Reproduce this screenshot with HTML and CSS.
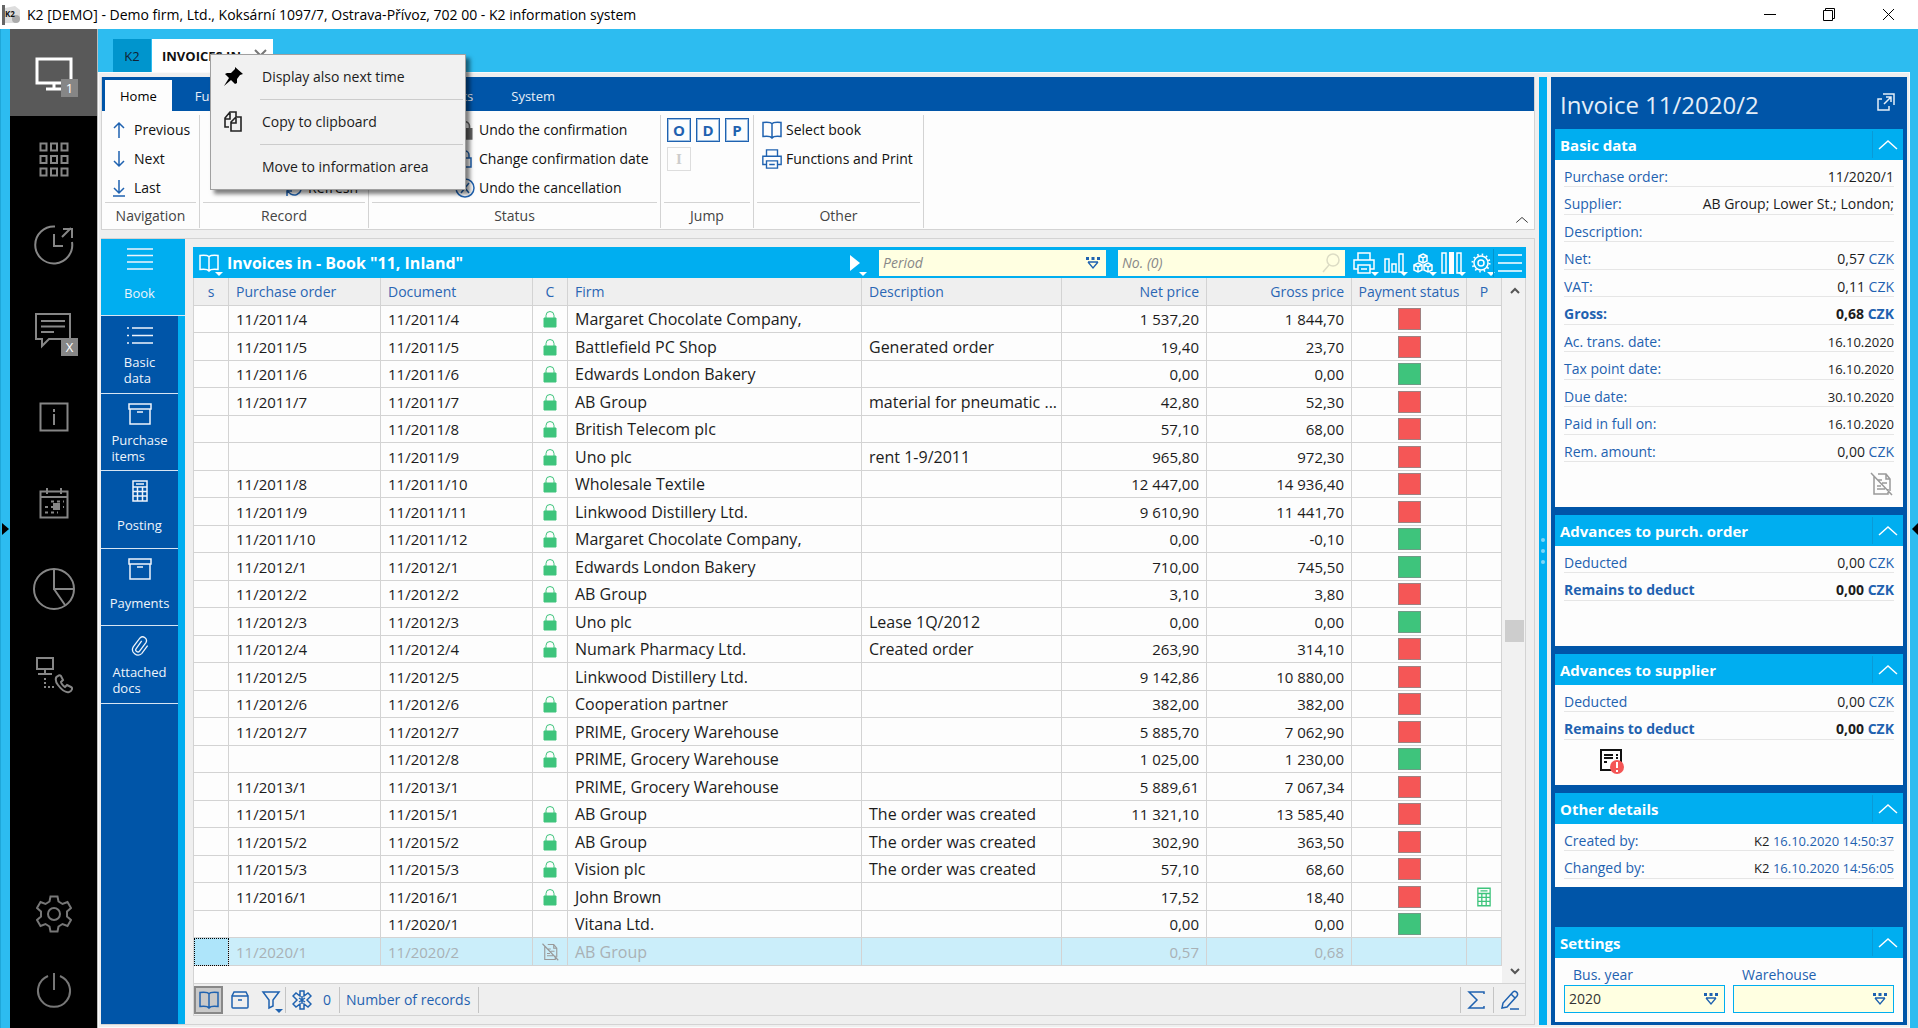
FILE: index.html
```html
<!DOCTYPE html>
<html lang="en">
<head>
<meta charset="utf-8">
<title>K2 information system</title>
<link rel="stylesheet" href="styles.css">
</head>
<body>
<svg class="sprite" aria-hidden="true">
  <symbol id="i-book" viewBox="0 0 22 20"><path d="M11 4v14M11 4C10 2 7 2 2 2.500v14C6 16 9.500 16 11 18 12.500 16 16 16 20 16.500v-14C15 2 12 2 11 4z"/></symbol>
  <symbol id="i-printer" viewBox="0 0 24 24"><path d="M6 9V2h12v7M6 18H2V9h20v9h-4M6 14h12v8H6zM9 18h6"/></symbol>
  <symbol id="i-lock" viewBox="0 0 16 18"><path d="M4 8V5.500a4 4 0 0 1 8 0V8" fill="none"/><path d="M2 8h12v9H2z" class="solid"/></symbol>
  <symbol id="i-lockline" viewBox="0 0 16 20"><path d="M4 9V6a4 4 0 0 1 8 0v3M2 9h12v9H2z"/></symbol>
  <symbol id="i-nodoc" viewBox="0 0 24 24"><path d="M5 4v18h14v-5M9 2h8l4 5v12M17 2v5h4M9 8h4M13 11h5M8 14h4M8 17h8M2 1l21 22"/></symbol>
  <symbol id="i-calc" viewBox="0 0 16 22"><path d="M1 1h14v20H1zM1 7h14M1 11.500h14M1 16h14M5.500 7v14M10.500 7v14M4 4h8"/></symbol>
  <symbol id="i-box" viewBox="0 0 24 22"><path d="M1 1h22v5H1zM2 6v15h20V6M9 9h6"/></symbol>
  <symbol id="i-clip" viewBox="0 0 24 26"><path d="M14 7l-6.500 9a2.500 2.500 0 0 0 4 3L19 9a4.500 4.500 0 0 0-7-5.500L4 14a6.500 6.500 0 0 0 10 8l7-9.500"/></symbol>
  <symbol id="i-up" viewBox="0 0 22 12"><path d="M2 10l9-8 9 8"/></symbol>
  <symbol id="i-drop" viewBox="0 0 16 14"><path d="M1 1h3v3H1zM6.500 1h3v3h-3zM12 1h3v3h-3z" fill="currentColor" stroke="none"/><path d="M3 6h10M3 6l5 6 5-6" fill="none" stroke-width="1.300"/></symbol>
</svg>

<header class="titlebar">
  <svg class="app-icon" viewBox="0 0 20 20"><path d="M0 0h3v20H0z" fill="#666"/><path d="M3 3l10-2 5 4v8l-5 5-10 0z" fill="#ddd"/><circle cx="14" cy="14" r="4" fill="#aaa"/><text x="3" y="12" font-size="8" font-weight="700" fill="#111">K2</text></svg>
  <h1>K2 [DEMO] - Demo firm, Ltd., Koksární 1097/7, Ostrava-Přívoz, 702 00 - K2 information system</h1>
  <div class="win-buttons">
    <button aria-label="Minimize"><svg width="15" height="15" viewBox="0 0 15 15"><path d="M1 7.500h12"/></svg></button>
    <button aria-label="Restore"><svg width="15" height="15" viewBox="0 0 15 15"><path d="M1.500 3.500h9v10h-9zM3.500 3.500v-2h9v10h-2"/></svg></button>
    <button aria-label="Close"><svg width="15" height="15" viewBox="0 0 15 15"><path d="M2 2l11 11M13 2L2 13"/></svg></button>
  </div>
</header>

<div class="app">
  <div class="edge edge-left"><svg width="7" height="12" viewBox="0 0 7 12"><path d="M0 0l7 6-7 6z"/></svg></div>
  <nav class="rail" aria-label="Modules">
    <button class="on" aria-label="Desktops"><svg width="38" height="36" viewBox="0 0 38 36"><path d="M2 4h34v24H2zM19 28v6M11 34h16"/></svg><span class="badge">1</span></button>
    <button aria-label="Applications"><svg width="30" height="36" viewBox="0 0 30 36"><path d="M1.500 2.500h6v7h-6zM12 2.500h6v7h-6zM22.500 2.500h6v7h-6zM1.500 15h6v7h-6zM12 15h6v7h-6zM22.500 15h6v7h-6zM1.500 27.500h6v7h-6zM12 27.500h6v7h-6zM22.500 27.500h6v7h-6z"/></svg></button>
    <button aria-label="History"><svg width="42" height="42" viewBox="0 0 42 42"><path d="M22 2.500A18.500 18.500 0 1 0 39 18M21 10v12h9M29 13l9-9M30 5h9v9"/></svg></button>
    <button aria-label="Messages"><svg width="40" height="38" viewBox="0 0 40 38"><path d="M2 2h34v25H15l-7 7v-7H2zM7 9h24M7 14.500h24M7 20h13"/></svg><span class="badge">X</span></button>
    <button aria-label="Information"><svg width="30" height="30" viewBox="0 0 30 30"><path d="M1.500 1.500h27v27h-27zM15 7v3M15 12v11"/></svg></button>
    <button aria-label="Calendar"><svg width="30" height="32" viewBox="0 0 30 32"><path d="M1.500 4.500h27v26h-27zM1.500 10h27M8 1v6M22 1v6"/><path d="M6 20h19M6 25.500h13M12 14.500h13" stroke-dasharray="3 3"/><path d="M15 17h5v5h-5z" fill="#868686"/></svg></button>
    <button aria-label="Statistics"><svg width="42" height="42" viewBox="0 0 42 42"><circle cx="21" cy="21" r="20"/><path d="M21 1v20h20M21 21l11 16"/></svg></button>
    <button aria-label="Telephone"><svg width="38" height="38" viewBox="0 0 38 38"><path d="M2 2h16v11H2zM10 13v4M3 18h14"/><path d="M10 22v9h9" stroke-dasharray="2 2"/><path d="M23 20c-3 1-3 5 0 9s7 8 11 7c3-1 4-4 2-5l-4-2-2 2c-2-1-4-4-4-5l2-2-2-4c-1-1-2-1-3 0z"/></svg></button>
    <button class="low first" aria-label="Settings"><svg width="36" height="38" viewBox="0 0 36 38"><path d="M14.500 1.500h7l1 5 4 2.500 5-2 3.500 6-4 3.500v5l4 3.500-3.500 6-5-2-4 2.500-1 5h-7l-1-5-4-2.500-5 2L1 25l4-3.500v-5L1 13l3.500-6 5 2 4-2.500z"/><circle cx="18" cy="19" r="6"/></svg></button>
    <button class="low" aria-label="Power"><svg width="36" height="36" viewBox="0 0 36 36"><path d="M12 4a16 16 0 1 0 12 0M18 1v17"/></svg></button>
  </nav>

  <main class="main">
    <div class="doc-tabs">
      <button class="doc-tab k2">K2</button>
      <button class="doc-tab current">INVOICES IN <svg width="13" height="13" viewBox="0 0 13 13"><path d="M1 1l11 11M12 1L1 12"/></svg></button>
      <div class="menu" role="menu">
        <button role="menuitem"><svg width="20" height="20" viewBox="0 0 20 20"><path d="M12 0l8 7-3 1-3 4 0 4-2 1-4-4-7 6 5-8-4-4 2-1 4 0 4-4z" fill="#000"/></svg>Display also next time</button>
        <hr>
        <button role="menuitem"><svg width="20" height="22" viewBox="0 0 20 22"><path d="M6 16H2V7l5-6h6v5M2 8h5V2M8 11l5-5h5v14H8zM8 12h5V7" fill="none" stroke="#222" stroke-width="1.600"/></svg>Copy to clipboard</button>
        <hr>
        <button role="menuitem"><svg width="20" height="20"></svg>Move to information area</button>
      </div>
    </div>

    <div class="workspace">
      <div class="left">
        <section class="ribbon">
          <div class="ribbon-tabs">
            <button class="on">Home</button><button>Functions</button><button>Communication</button><button>Reports</button><button>System</button>
          </div>
          <div class="ribbon-body">
            <div class="group navigation">
              <div class="cmds">
                <button class="cmd"><svg width="22" height="18" viewBox="0 0 22 18"><path d="M11 17V2M6 7l5-5 5 5"/></svg>Previous</button>
                <button class="cmd"><svg width="22" height="18" viewBox="0 0 22 18"><path d="M11 1v15M6 11l5 5 5-5"/></svg>Next</button>
                <button class="cmd"><svg width="22" height="18" viewBox="0 0 22 18"><path d="M11 1v13M6 9l5 5 5-5M5 17h12"/></svg>Last</button>
              </div>
              <h2>Navigation</h2>
            </div>
            <div class="group record">
              <div class="cmds">
                <button class="cmd"><svg width="20" height="20" viewBox="0 0 20 20"><path d="M16 6a7 7 0 1 0 1 6M17 2v5h-5M3 18v-5h5"/></svg>Refresh</button>
              </div>
              <h2>Record</h2>
            </div>
            <div class="group status">
              <div class="cmds">
                <button class="cmd"><svg class="grey" width="20" height="20"><use href="#i-lock"/></svg>Undo the confirmation</button>
                <button class="cmd"><svg width="20" height="20"><use href="#i-lockline"/></svg>Change confirmation date</button>
                <button class="cmd"><svg width="20" height="20" viewBox="0 0 20 20"><circle cx="10" cy="10" r="9"/><path d="M6 5l8 10M14 5L6 15"/></svg>Undo the cancellation</button>
              </div>
              <h2>Status</h2>
            </div>
            <div class="group jump">
              <div class="cmds letters"><button>O</button><button>D</button><button>P</button><button class="serif" disabled>I</button></div>
              <h2>Jump</h2>
            </div>
            <div class="group other">
              <div class="cmds">
                <button class="cmd"><svg width="22" height="20"><use href="#i-book"/></svg>Select book</button>
                <button class="cmd"><svg width="22" height="22"><use href="#i-printer"/></svg>Functions and Print</button>
              </div>
              <h2>Other</h2>
            </div>
            <button class="collapse" aria-label="Collapse ribbon"><svg width="14" height="8"><use href="#i-up"/></svg></button>
          </div>
        </section>

        <section class="content">
          <nav class="pages" aria-label="Pages">
            <button class="on"><svg width="26" height="22" viewBox="0 0 26 22"><path d="M0 1h26M0 7.500h26M0 14h26M0 21h26"/></svg><span>Book</span></button>
            <button><svg width="26" height="22" viewBox="0 0 26 22"><path d="M0 3h2M5 3h21M0 10.500h2M5 10.500h21M0 18h2M5 18h21"/></svg><span>Basic<br>data</span></button>
            <button><svg width="24" height="22"><use href="#i-box"/></svg><span>Purchase<br>items</span></button>
            <button><svg width="16" height="22"><use href="#i-calc"/></svg><span>Posting</span></button>
            <button><svg width="24" height="22"><use href="#i-box"/></svg><span>Payments</span></button>
            <button><svg width="24" height="22"><use href="#i-clip"/></svg><span>Attached<br>docs</span></button>
          </nav>

          <div class="grid">
            <div class="grid-head">
              <button class="tool" aria-label="Book"><svg width="22" height="20"><use href="#i-book"/></svg><i></i></button>
              <h2>Invoices in - Book "11, Inland"</h2>
              <button class="tool play" aria-label="Run"><svg width="10" height="16" viewBox="0 0 10 16"><path d="M0 0l10 8-10 8z" fill="#fff" stroke="none"/></svg><i></i></button>
              <div class="field"><input type="text" placeholder="Period" aria-label="Period"><svg width="16" height="14"><use href="#i-drop"/></svg></div>
              <div class="field"><input type="text" placeholder="No. (0)" aria-label="Number"><svg class="search" width="18" height="20" viewBox="0 0 18 20"><circle cx="11" cy="7" r="6"/><path d="M7 12l-6 7"/></svg></div>
              <div class="tools">
                <button class="tool" aria-label="Print"><svg width="24" height="24"><use href="#i-printer"/></svg><i></i></button>
                <button class="tool" aria-label="Charts"><svg width="22" height="22" viewBox="0 0 22 22"><path d="M2 7h4v13H2zM9 12h4v8H9zM16 2h4v18h-4z"/></svg><i></i></button>
                <button class="tool" aria-label="Cubes"><svg width="22" height="22" viewBox="0 0 22 22"><path d="M11 2l4 2v5l-4 2-4-2V4zM6 11l4 2v5l-4 2-4-2v-5zM16 11l4 2v5l-4 2-4-2v-5zM7 4l4 2 4-2M11 6v5M2 13l4 2 4-2M6 15v5M12 13l4 2 4-2M16 15v5"/></svg><i></i></button>
                <button class="tool" aria-label="Columns"><svg width="22" height="22" viewBox="0 0 22 22"><path d="M1 1h4v20H1zM16 1h4v20h-4z"/><path d="M8 0h5v22H8z" fill="#fff" stroke="none"/></svg><i></i></button>
                <button class="tool" aria-label="Settings"><svg width="22" height="22" viewBox="0 0 22 22"><circle cx="11" cy="11" r="7"/><circle cx="11" cy="11" r="3"/><circle cx="11" cy="11" r="8.500" stroke-width="2" stroke-dasharray="1.500 3"/></svg><i></i></button>
                <button class="tool burger" aria-label="Menu"><svg width="24" height="18" viewBox="0 0 24 18"><path d="M0 1h24M0 9h24M0 17h24"/></svg></button>
              </div>
            </div>

            <div class="grid-body">
              <div class="table-wrap">
              <table>
                <colgroup><col class="c-s"><col class="c-doc"><col class="c-doc"><col class="c-s"><col><col class="c-desc"><col class="c-num"><col class="c-num"><col class="c-pay"><col class="c-s"></colgroup>
                <thead><tr><th class="mid">s</th><th>Purchase order</th><th>Document</th><th class="mid">C</th><th>Firm</th><th>Description</th><th class="num">Net price</th><th class="num">Gross price</th><th class="mid">Payment status</th><th class="mid">P</th></tr></thead>
                <tbody>
                <tr><td></td><td>11/2011/4</td><td>11/2011/4</td><td><svg class="lock"><use href="#i-lock"/></svg></td><td>Margaret Chocolate Company,</td><td></td><td>1 537,20</td><td>1 844,70</td><td><b class="red"></b></td><td></td></tr>
                <tr><td></td><td>11/2011/5</td><td>11/2011/5</td><td><svg class="lock"><use href="#i-lock"/></svg></td><td>Battlefield PC Shop</td><td>Generated order</td><td>19,40</td><td>23,70</td><td><b class="red"></b></td><td></td></tr>
                <tr><td></td><td>11/2011/6</td><td>11/2011/6</td><td><svg class="lock"><use href="#i-lock"/></svg></td><td>Edwards London Bakery</td><td></td><td>0,00</td><td>0,00</td><td><b class="green"></b></td><td></td></tr>
                <tr><td></td><td>11/2011/7</td><td>11/2011/7</td><td><svg class="lock"><use href="#i-lock"/></svg></td><td>AB Group</td><td>material for pneumatic ...</td><td>42,80</td><td>52,30</td><td><b class="red"></b></td><td></td></tr>
                <tr><td></td><td></td><td>11/2011/8</td><td><svg class="lock"><use href="#i-lock"/></svg></td><td>British Telecom plc</td><td></td><td>57,10</td><td>68,00</td><td><b class="red"></b></td><td></td></tr>
                <tr><td></td><td></td><td>11/2011/9</td><td><svg class="lock"><use href="#i-lock"/></svg></td><td>Uno plc</td><td>rent 1-9/2011</td><td>965,80</td><td>972,30</td><td><b class="red"></b></td><td></td></tr>
                <tr><td></td><td>11/2011/8</td><td>11/2011/10</td><td><svg class="lock"><use href="#i-lock"/></svg></td><td>Wholesale Textile</td><td></td><td>12 447,00</td><td>14 936,40</td><td><b class="red"></b></td><td></td></tr>
                <tr><td></td><td>11/2011/9</td><td>11/2011/11</td><td><svg class="lock"><use href="#i-lock"/></svg></td><td>Linkwood Distillery Ltd.</td><td></td><td>9 610,90</td><td>11 441,70</td><td><b class="red"></b></td><td></td></tr>
                <tr><td></td><td>11/2011/10</td><td>11/2011/12</td><td><svg class="lock"><use href="#i-lock"/></svg></td><td>Margaret Chocolate Company,</td><td></td><td>0,00</td><td>-0,10</td><td><b class="green"></b></td><td></td></tr>
                <tr><td></td><td>11/2012/1</td><td>11/2012/1</td><td><svg class="lock"><use href="#i-lock"/></svg></td><td>Edwards London Bakery</td><td></td><td>710,00</td><td>745,50</td><td><b class="green"></b></td><td></td></tr>
                <tr><td></td><td>11/2012/2</td><td>11/2012/2</td><td><svg class="lock"><use href="#i-lock"/></svg></td><td>AB Group</td><td></td><td>3,10</td><td>3,80</td><td><b class="red"></b></td><td></td></tr>
                <tr><td></td><td>11/2012/3</td><td>11/2012/3</td><td><svg class="lock"><use href="#i-lock"/></svg></td><td>Uno plc</td><td>Lease 1Q/2012</td><td>0,00</td><td>0,00</td><td><b class="green"></b></td><td></td></tr>
                <tr><td></td><td>11/2012/4</td><td>11/2012/4</td><td><svg class="lock"><use href="#i-lock"/></svg></td><td>Numark Pharmacy Ltd.</td><td>Created order</td><td>263,90</td><td>314,10</td><td><b class="red"></b></td><td></td></tr>
                <tr><td></td><td>11/2012/5</td><td>11/2012/5</td><td></td><td>Linkwood Distillery Ltd.</td><td></td><td>9 142,86</td><td>10 880,00</td><td><b class="red"></b></td><td></td></tr>
                <tr><td></td><td>11/2012/6</td><td>11/2012/6</td><td><svg class="lock"><use href="#i-lock"/></svg></td><td>Cooperation partner</td><td></td><td>382,00</td><td>382,00</td><td><b class="red"></b></td><td></td></tr>
                <tr><td></td><td>11/2012/7</td><td>11/2012/7</td><td><svg class="lock"><use href="#i-lock"/></svg></td><td>PRIME, Grocery Warehouse</td><td></td><td>5 885,70</td><td>7 062,90</td><td><b class="red"></b></td><td></td></tr>
                <tr><td></td><td></td><td>11/2012/8</td><td><svg class="lock"><use href="#i-lock"/></svg></td><td>PRIME, Grocery Warehouse</td><td></td><td>1 025,00</td><td>1 230,00</td><td><b class="green"></b></td><td></td></tr>
                <tr><td></td><td>11/2013/1</td><td>11/2013/1</td><td></td><td>PRIME, Grocery Warehouse</td><td></td><td>5 889,61</td><td>7 067,34</td><td><b class="red"></b></td><td></td></tr>
                <tr><td></td><td>11/2015/1</td><td>11/2015/1</td><td><svg class="lock"><use href="#i-lock"/></svg></td><td>AB Group</td><td>The order was created</td><td>11 321,10</td><td>13 585,40</td><td><b class="red"></b></td><td></td></tr>
                <tr><td></td><td>11/2015/2</td><td>11/2015/2</td><td><svg class="lock"><use href="#i-lock"/></svg></td><td>AB Group</td><td>The order was created</td><td>302,90</td><td>363,50</td><td><b class="red"></b></td><td></td></tr>
                <tr><td></td><td>11/2015/3</td><td>11/2015/3</td><td><svg class="lock"><use href="#i-lock"/></svg></td><td>Vision plc</td><td>The order was created</td><td>57,10</td><td>68,60</td><td><b class="red"></b></td><td></td></tr>
                <tr><td></td><td>11/2016/1</td><td>11/2016/1</td><td><svg class="lock"><use href="#i-lock"/></svg></td><td>John Brown</td><td></td><td>17,52</td><td>18,40</td><td><b class="red"></b></td><td><svg class="calc" width="14" height="20"><use href="#i-calc"/></svg></td></tr>
                <tr><td></td><td></td><td>11/2020/1</td><td></td><td>Vitana Ltd.</td><td></td><td>0,00</td><td>0,00</td><td><b class="green"></b></td><td></td></tr>
                <tr class="selected"><td></td><td>11/2020/1</td><td>11/2020/2</td><td><svg class="nodoc" width="18" height="18"><use href="#i-nodoc"/></svg></td><td>AB Group</td><td></td><td>0,57</td><td>0,68</td><td></td><td></td></tr>
                </tbody>
              </table>
              </div>
              <div class="scroll">
                <button aria-label="Scroll up"><svg width="14" height="9" viewBox="0 0 14 9"><path d="M3 7l4-4 4 4"/></svg></button>
                <div class="track"><div class="thumb"></div></div>
                <button aria-label="Scroll down"><svg width="14" height="9" viewBox="0 0 14 9"><path d="M3 2l4 4 4-4"/></svg></button>
              </div>
            </div>

            <footer class="grid-foot">
              <button class="tool pressed" aria-label="Book view"><svg width="22" height="20"><use href="#i-book"/></svg></button>
              <button class="tool" aria-label="Containers"><svg width="20" height="20" viewBox="0 0 20 20"><path d="M2 6h16v11a1 1 0 0 1-1 1H3a1 1 0 0 1-1-1zM2 6l2-4h12l2 4M8 10h4"/></svg></button>
              <button class="tool filter" aria-label="Filter"><svg width="20" height="20" viewBox="0 0 20 20"><path d="M2 2h16l-6 8v6l-4 2v-8z"/></svg><i></i></button>
              <span class="cell"><svg width="20" height="20" viewBox="0 0 20 20"><path d="M8 1h4v5l4-3 3 3-4 4 4 4-3 3-4-3v5H8v-5l-4 3-3-3 4-4-4-4 3-3 4 3z"/><path d="M10 6v8M7 8l6 4M13 8l-6 4"/></svg>0</span>
              <span class="cell">Number of records</span>
              <span class="gap"></span>
              <button class="cell" aria-label="Sum"><svg width="18" height="20" viewBox="0 0 18 20"><path d="M17 4V2H2l8 8-8 8h15v-2"/></svg></button>
              <button class="cell last" aria-label="Edit"><svg width="20" height="20" viewBox="0 0 20 20"><path d="M2 18l1-5L13 2c2-2 6 1 4 4L7 17zM11 4l4 4M10 19h9"/></svg></button>
            </footer>
          </div>
        </section>
      </div>

      <div class="splitter"><i></i><i></i><i></i></div>

      <aside class="detail">
        <header><h2>Invoice 11/2020/2</h2><button aria-label="Open in window"><svg width="18" height="18" viewBox="0 0 18 18"><path d="M5 6H1v11h11v-4M6 1h11v11M7 11l7-7M9 4h5v5"/></svg></button></header>

        <section class="card basic">
          <h3>Basic data<button aria-label="Collapse"><svg width="22" height="12"><use href="#i-up"/></svg></button></h3>
          <dl>
            <div><dt>Purchase order:</dt><dd>11/2020/1</dd></div>
            <div><dt>Supplier:</dt><dd>AB Group; Lower St.; London;</dd></div>
            <div><dt>Description:</dt><dd></dd></div>
            <div><dt>Net:</dt><dd>0,57 <em>CZK</em></dd></div>
            <div><dt>VAT:</dt><dd>0,11 <em>CZK</em></dd></div>
            <div class="strong"><dt>Gross:</dt><dd>0,68 <em>CZK</em></dd></div>
            <div><dt>Ac. trans. date:</dt><dd class="date">16.10.2020</dd></div>
            <div><dt>Tax point date:</dt><dd class="date">16.10.2020</dd></div>
            <div><dt>Due date:</dt><dd class="date">30.10.2020</dd></div>
            <div><dt>Paid in full on:</dt><dd class="date">16.10.2020</dd></div>
            <div><dt>Rem. amount:</dt><dd>0,00 <em>CZK</em></dd></div>
          </dl>
          <svg class="nodoc" width="24" height="24"><use href="#i-nodoc"/></svg>
        </section>

        <section class="card advance">
          <h3>Advances to purch. order<button aria-label="Collapse"><svg width="22" height="12"><use href="#i-up"/></svg></button></h3>
          <dl>
            <div><dt>Deducted</dt><dd>0,00 <em>CZK</em></dd></div>
            <div class="strong"><dt>Remains to deduct</dt><dd>0,00 <em>CZK</em></dd></div>
          </dl>
        </section>

        <section class="card advance">
          <h3>Advances to supplier<button aria-label="Collapse"><svg width="22" height="12"><use href="#i-up"/></svg></button></h3>
          <dl>
            <div><dt>Deducted</dt><dd>0,00 <em>CZK</em></dd></div>
            <div class="strong"><dt>Remains to deduct</dt><dd>0,00 <em>CZK</em></dd></div>
          </dl>
          <svg class="warn" width="26" height="26" viewBox="0 0 26 26"><path d="M2 2h20v20H2zM5 7h9M5 10h9M5 14h3M17 7h2M17 10h2" fill="none" stroke="#111" stroke-width="2"/><circle cx="18" cy="19" r="7" fill="#f45555" stroke="none"/><path d="M18 14v6M18 22v2" stroke="#fff" stroke-width="2"/></svg>
        </section>

        <section class="card">
          <h3>Other details<button aria-label="Collapse"><svg width="22" height="12"><use href="#i-up"/></svg></button></h3>
          <dl>
            <div><dt>Created by:</dt><dd class="date">K2 <em>16.10.2020 14:50:37</em></dd></div>
            <div><dt>Changed by:</dt><dd class="date">K2 <em>16.10.2020 14:56:05</em></dd></div>
          </dl>
        </section>

        <section class="card settings">
          <h3>Settings<button aria-label="Collapse"><svg width="22" height="12"><use href="#i-up"/></svg></button></h3>
          <form>
            <label>Bus. year<span class="field"><select><option>2020</option></select><svg width="16" height="14"><use href="#i-drop"/></svg></span></label>
            <label>Warehouse<span class="field"><select><option></option></select><svg width="16" height="14"><use href="#i-drop"/></svg></span></label>
          </form>
        </section>
      </aside>
    </div>
  </main>
  <div class="edge edge-right"><svg width="6" height="12" viewBox="0 0 6 12"><path d="M6 0L0 6l6 6z"/></svg></div>
</div>
</body>
</html>
```
FILE: styles.css
```css
:root {
  --sky: #2dbcf0;
  --cyan: #00aef0;
  --navy: #0055a8;
  --blue: #1f62b0;
  --line: #d3d3d3;
  --panel: #efefef;
  --paper: #fdfdfd;
}
* { box-sizing: border-box; }
body {
  margin: 0;
  min-height: 100vh;
  display: flex;
  flex-direction: column;
  background: var(--sky);
  color: #1c1c1c;
  font: 14px/20px "Open Sans", "Noto Sans", sans-serif;
}
h1, h2, h3, dl, dd { margin: 0; }
h1, h2, h3 { font-size: inherit; font-weight: 400; }
button, input, select { font: inherit; color: inherit; border: 0; background: none; padding: 0; margin: 0; }
svg { fill: none; stroke: currentColor; stroke-width: 1.500; flex: none; }
.solid { fill: currentColor; }
.sprite { position: absolute; width: 0; height: 0; }

/* Window title */
.titlebar { display: flex; align-items: center; height: 29px; padding-left: 2px; background: #fff; color: #000; }
.titlebar h1 { flex: 1; font-size: 14px; line-height: 28px; margin-left: 5px; }
.app-icon { width: 20px; height: 20px; stroke: none; }
.win-buttons { display: flex; }
.win-buttons button { width: 59px; height: 29px; display: grid; place-items: center; }
.win-buttons svg { stroke-width: 1; }

.app { flex: 1; display: flex; }
.edge { display: flex; align-items: center; color: #000; }
.edge svg { fill: #000; stroke: none; }
.edge-left { width: 10px; border-left: 1px solid #1fa7d8; padding-left: 1px; }
.edge-right { width: 8px; justify-content: flex-end; }

/* Module rail */
.rail { width: 88px; background: #000; border-right: 1px solid #bbb; color: #868686; display: flex; flex-direction: column; }
.rail button { position: relative; height: 86px; display: grid; place-items: center; }
.rail button.on { height: 87px; background: #595959; color: #fff; }
.rail svg { stroke-width: 2; }
.rail .on svg { stroke-width: 3; }
.rail button.low { height: 76px; color: #777; }
.rail button.first { margin-top: auto; }
.badge { position: absolute; left: 51px; top: 50px; width: 17px; height: 18px; background: #868686; color: #fff; font-size: 13px; line-height: 18px; text-align: center; }

/* Document tabs and their menu */
.main { flex: 1; min-width: 0; display: flex; flex-direction: column; }
.doc-tabs { position: relative; height: 43px; padding-left: 15px; display: flex; align-items: flex-end; gap: 1px; }
.doc-tab { height: 33px; color: #111; }
.doc-tab.k2 { width: 38px; background: #0095cd; font-size: 13px; color: #123; }
.doc-tab.current { width: 121px; background: #fff; font-weight: 700; font-size: 13px; display: flex; align-items: center; justify-content: space-between; padding: 0 6px 0 10px; white-space: nowrap; }
.doc-tab svg { color: #777; stroke-width: 2; }
.menu { position: absolute; z-index: 5; left: 112px; top: 25px; width: 256px; background: #f1f1f1; border: 1px solid #a0a0a0; box-shadow: 4px 4px 4px rgba(0, 0, 0, .5); }
.menu button { width: 100%; height: 44px; display: flex; align-items: center; gap: 19px; padding-left: 12px; }
.menu svg { stroke: none; }
.menu hr { margin: 0 2px 0 49px; border: 0; height: 1px; background: #ccc; }

/* Workspace */
.workspace { flex: 1; display: flex; gap: 4px; background: var(--panel); border: 1px solid #fafafa; padding: 4px 2px 2px; }
.left { flex: 1; min-width: 0; display: flex; flex-direction: column; gap: 8px; }
.splitter { width: 8px; background: var(--cyan); display: flex; flex-direction: column; align-items: center; justify-content: center; gap: 7px; }
.splitter i { width: 4px; height: 4px; border-radius: 2px; background: #7fd6f7; }

/* Ribbon */
.ribbon { border: 1px solid var(--line); border-top: 0; background: var(--paper); }
.ribbon-tabs { height: 34px; background: var(--navy); display: flex; align-items: flex-end; gap: 8px; padding-left: 3px; font-size: 13px; color: #e6eef7; }
.ribbon-tabs button { height: 31px; padding: 0 15px; }
.ribbon-tabs .on { background: var(--paper); color: #000; }
.ribbon-body { display: flex; height: 118px; padding: 4px 0 1px; }
.group { display: flex; flex-direction: column; border-right: 1px solid var(--line); color: #111; }
.group h2 { margin: 0 3px; border-top: 1px solid var(--line); text-align: center; line-height: 25px; color: #444; }
.cmds { height: 87px; display: flex; flex-direction: column; }
.cmd { height: 29px; display: flex; align-items: center; white-space: nowrap; }
.cmd svg { color: var(--blue); }
.navigation { width: 98px; }
.navigation .cmd { gap: 4px; padding-left: 6px; }
.record { width: 169px; }
.record .cmds { justify-content: flex-end; padding-left: 84px; }
.record .cmd { gap: 4px; }
.status { width: 292px; }
.status .cmds { padding-left: 86px; }
.status .cmd { gap: 4px; }
.status .grey { color: #666; }
.jump { width: 93px; }
.letters { display: grid; grid-template-columns: repeat(3, 24px); grid-auto-rows: 29px; gap: 0 5px; padding-left: 6px; align-items: center; }
.letters button { height: 24px; border: 1px solid var(--blue); outline: 1px solid #9dbfe2; outline-offset: -2px; color: var(--blue); font-weight: 700; font-size: 15px; line-height: 20px; }
.letters button:disabled { border-color: #ddd; outline: 0; color: #ccc; }
.letters .serif { font-family: "Liberation Serif", serif; }
.other { width: 170px; }
.other .cmd { gap: 3px; padding-left: 7px; }
.collapse { margin-left: auto; align-self: flex-end; padding: 0 5px 4px; line-height: 0; color: #333; }

/* Content frame and page list */
.content { flex: 1; display: flex; border: 1px solid var(--line); border-left: 0; }
.pages { width: 84px; background: linear-gradient(to right, var(--navy) 77px, var(--cyan) 77px); color: #eef4fb; font-size: 13px; line-height: 16px; display: flex; flex-direction: column; }
.pages button { width: 77px; height: 77px; border-bottom: 1px solid #d7e5f3; display: flex; flex-direction: column; align-items: center; padding-top: 9px; text-align: left; }
.pages button:nth-child(even) { height: 78px; }
.pages .on { width: 84px; padding-right: 7px; background: var(--cyan); }
.pages span { margin: auto 0; }

/* Invoice list */
.grid { flex: 1; min-width: 0; margin: 8px; display: flex; flex-direction: column; }
.grid-head { height: 31px; background: var(--cyan); color: #fff; display: flex; align-items: center; padding: 0 4px 0 5px; }
.grid-head h2 { flex: 1; margin-left: 7px; font-size: 16px; font-weight: 700; }
.tool { position: relative; display: grid; place-items: center; height: 28px; }
.tool i { position: absolute; right: -3px; bottom: 1px; border: 4px solid transparent; border-top-color: currentColor; border-bottom: 0; }
.play { width: 14px; margin-right: 15px; justify-items: start; }
.field { display: flex; align-items: center; background: #ffffe1; padding-right: 5px; }
.field input, .field select { flex: 1; min-width: 0; height: 26px; padding: 0 4px; color: #333; appearance: none; outline: 0; }
.field input::placeholder { color: #888; font-style: italic; opacity: 1; }
.field svg { color: var(--blue); }
.field .search { color: #dcdcc4; }
.grid-head .field { width: 227px; margin-right: 12px; }
.grid-head .field + .field { margin-right: 7px; }
.tools { display: flex; gap: 7px; }
.tools .burger { border-left: 1px solid #0393cc; padding-left: 4px; margin-left: -6px; }

.grid-body { flex: 1; display: flex; align-items: flex-start; background: var(--paper); border-left: 1px solid var(--line); border-right: 1px solid var(--line); }
.table-wrap { flex: 1; min-width: 0; }
table { width: 100%; table-layout: fixed; border-collapse: separate; border-spacing: 0; }
.c-s { width: 35px; }
.c-doc { width: 152px; }
.c-desc { width: 200px; }
.c-num { width: 145px; }
.c-pay { width: 115px; }
th, td { padding: 0 7px; border-right: 1px solid var(--line); border-bottom: 1px solid var(--line); white-space: nowrap; overflow: hidden; text-align: left; }
th { height: 28px; background: var(--panel); color: #2a66b4; font-weight: 400; font-size: 14px; line-height: 24px; }
th.mid { text-align: center; padding: 0; }
th.num { text-align: right; }
td { height: 27px; font-size: 15px; line-height: 24px; }
tr:nth-child(even) td { height: 28px; }
td:nth-child(5), td:nth-child(6) { font-size: 16px; }
td:nth-child(7), td:nth-child(8) { text-align: right; }
td:nth-child(4), td:nth-child(9), td:nth-child(10) { text-align: center; padding: 0; line-height: 0; }
td b { display: inline-block; width: 23px; height: 22px; border: 1px solid #a08080; }
.red { background: #f55656; }
.green { background: #3ec47c; border-color: #6f9c86; }
.lock { width: 16px; height: 18px; color: #3ec47c; stroke-width: 1; }
.calc { color: #3ec47c; }
.nodoc { color: #999; }
.selected td { background: #cbeefa; color: #a9b1b5; }
.selected td:first-child { background: #aee5fa; outline: 1px dotted #000; outline-offset: -1px; }

.scroll { align-self: stretch; width: 23px; background: #f1f1f1; display: flex; flex-direction: column; color: #555; }
.scroll button { height: 24px; padding-left: 2px; display: grid; place-items: center; }
.scroll svg { stroke-width: 2; }
.track { flex: 1; display: flex; flex-direction: column; justify-content: center; padding: 0 1px 0 3px; }
.thumb { height: 22px; background: #cdcdcd; }

.grid-foot { height: 33px; border: 1px solid var(--line); background: var(--panel); color: var(--blue); display: flex; align-items: center; }
.grid-foot .tool { width: 34px; }
.grid-foot .pressed { width: 29px; border: 2px solid #888; background: #c9c9c9; }
.grid-foot .filter { width: 28px; }
.grid-foot .filter i { right: 2px; }
.cell { display: flex; align-items: center; gap: 11px; height: 26px; padding: 0 8px 0 6px; border-left: 1px solid #c4c4c4; }
.last { padding-right: 5px; }
.gap { flex: 1; border-left: 1px solid #c4c4c4; height: 26px; }

/* Detail panel */
.detail { width: 356px; background: var(--navy); padding: 0 4px 3px; display: flex; flex-direction: column; }
.detail > header { height: 52px; display: flex; align-items: center; justify-content: space-between; padding: 4px 8px 0 5px; color: #e4eef8; }
.detail > header h2 { font-size: 24px; line-height: 32px; }
.detail > header button { align-self: flex-start; padding-top: 12px; }
.card { margin-bottom: 8px; background: var(--paper); display: flex; flex-direction: column; }
.card h3 { height: 31px; background: var(--cyan); color: #fff; font-size: 15px; font-weight: 700; display: flex; align-items: center; justify-content: space-between; padding-left: 5px; }
.card h3 button { width: 31px; height: 27px; border-left: 1px solid #0a9ad6; display: grid; place-items: center; }
.card dl { margin: 0 9px 8px; }
.card dl div { display: flex; justify-content: space-between; height: 27px; padding-top: 8px; line-height: 18px; border-bottom: 1px solid #e6e6e6; }
.card dl div:nth-child(even) { height: 28px; }
.card dt, .card em { color: var(--blue); font-style: normal; }
.card .date { font-size: 13px; }
.card .strong { font-weight: 700; }
.basic .nodoc { margin: 2px 10px 11px auto; }
.advance { min-height: 131px; }
.advance .warn { margin-left: 44px; }
.settings { margin: auto 0 0; }
.settings form { display: grid; grid-template-columns: 1fr 1fr; gap: 8px; padding: 7px 9px 9px; }
.settings label { color: var(--blue); text-indent: 9px; line-height: 20px; }
.settings .field { border: 1px solid var(--cyan); text-indent: 0; }
```
